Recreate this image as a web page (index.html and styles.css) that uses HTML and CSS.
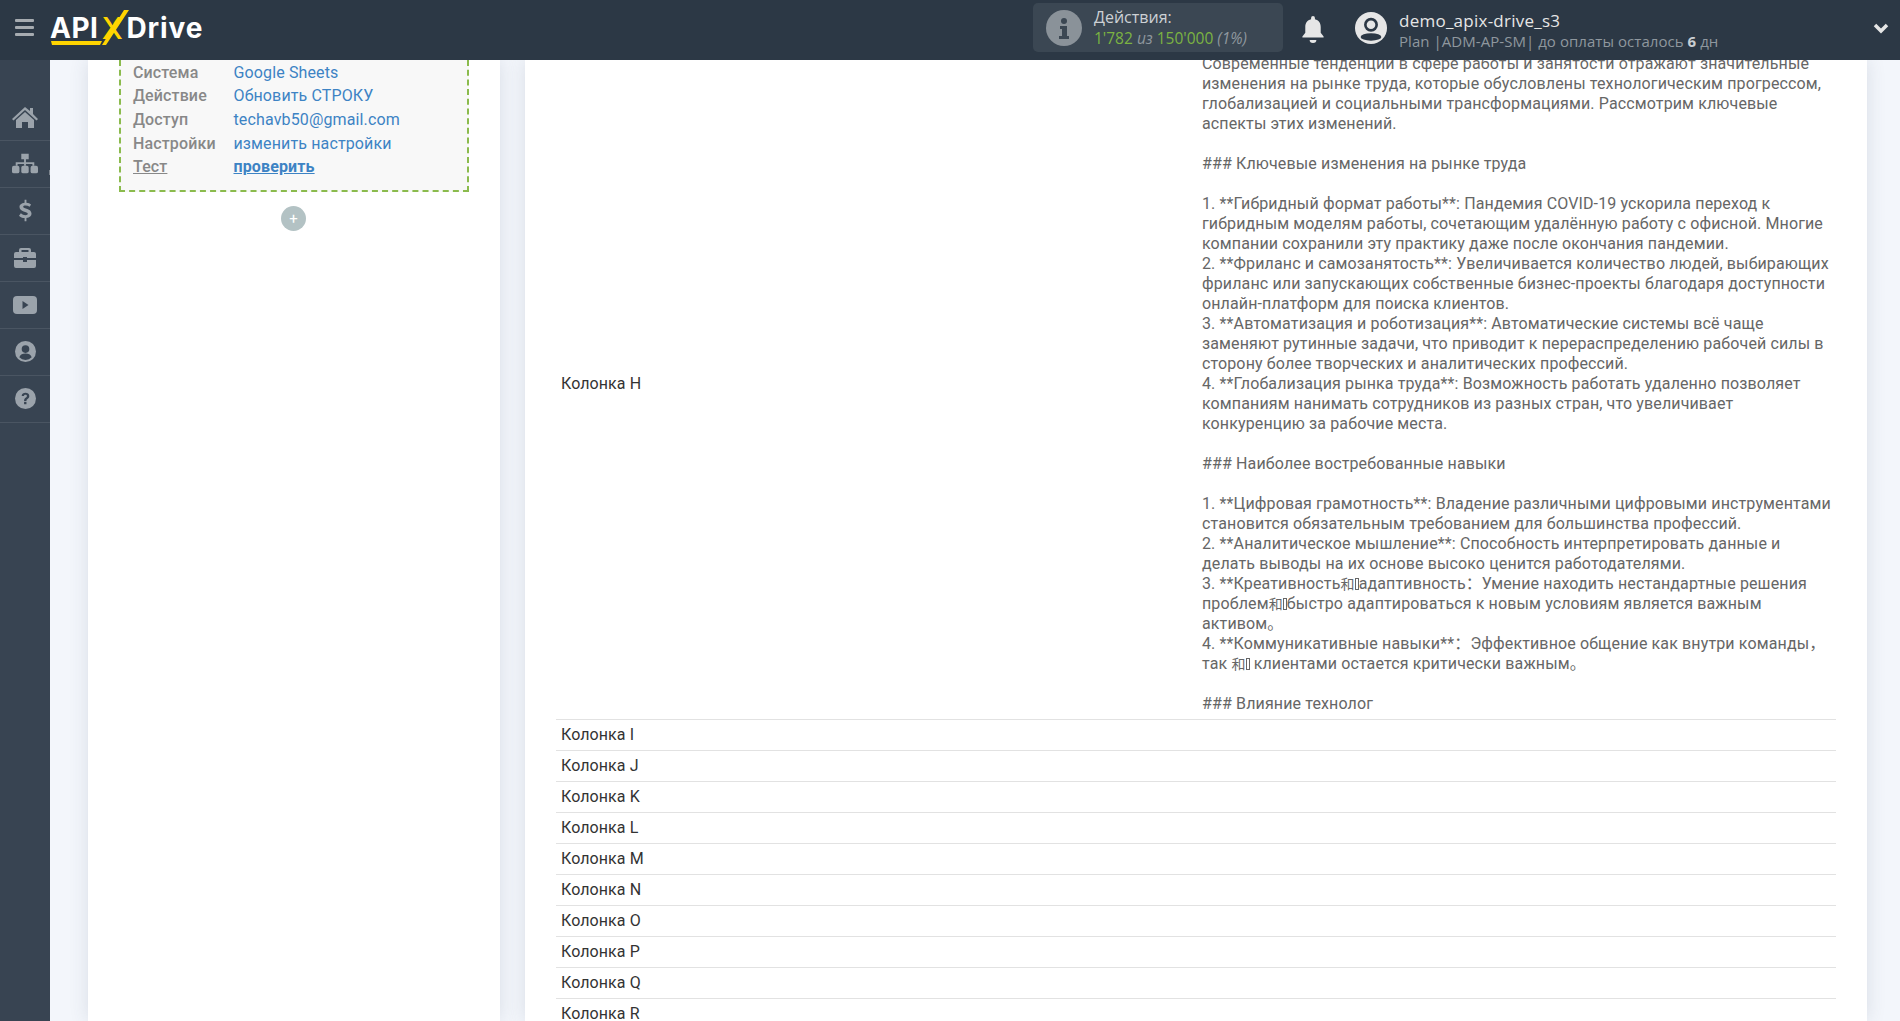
FILE: index.html
```html
<!DOCTYPE html>
<html lang="ru">
<head>
<meta charset="utf-8">
<title>ApiX-Drive</title>
<link rel="stylesheet" href="styles.css">
</head>
<body>
<header class="topbar">
  <div class="burger"><span></span><span></span><span></span></div>
  <div class="logo">
    <span class="logo-api">API</span><span class="logo-x">X</span><span class="logo-drive">Drive</span>
    <svg class="logo-mark" viewBox="50 8 80 38" aria-hidden="true"><polygon points="51,40 102,40 100,44 52,44" fill="#ffd400"/><polygon points="102,44 124,9 129,9 106,44" fill="#ffd400"/></svg>
  </div>
  <div class="actions">
    <svg class="info" viewBox="0 0 36 36"><circle cx="18" cy="18" r="18" fill="#8a9299"/><circle cx="18" cy="11" r="3" fill="#3b4753"/><path d="M14 16h7v10h2v3H13v-3h3v-7h-2z" fill="#3b4753"/></svg>
    <div class="actions-text">
      <div class="actions-title">Действия:</div>
      <div class="actions-count"><span class="green">1'782</span> <i>из</i> <span class="green">150'000</span> <i>(1%)</i></div>
    </div>
  </div>
  <svg class="bell" viewBox="0 0 24 28"><path d="M12 0a2 2 0 0 1 2 2v1.300c4 1 6 4 6 8v6l3 4v1H1v-1l3-4v-6c0-4 2-7 6-8V2a2 2 0 0 1 2-2z" fill="#e6e6e6"/><path d="M8.500 25h7a3.500 3 0 0 1-7 0z" fill="#e6e6e6"/></svg>
  <svg class="avatar" viewBox="0 0 34 34"><circle cx="17" cy="17" r="17" fill="#e6e6e6"/><circle cx="17" cy="13.500" r="6" fill="#e6e6e6" stroke="#2c3845" stroke-width="2.800"/><ellipse cx="17" cy="26.500" rx="11" ry="4" fill="#2c3845"/></svg>
  <div class="user">
    <div class="user-name">demo_apix-drive_s3</div>
    <div class="user-plan">Plan |ADM-AP-SM| до оплаты осталось <b>6</b> дн</div>
  </div>
  <svg class="chevron" viewBox="0 0 16 12"><path d="M2 3l6 6 6-6" fill="none" stroke="#e6e6e6" stroke-width="3.500"/></svg>
</header>
<div class="body">
  <nav class="sidebar">
    <div class="side-item"><svg class="wide" viewBox="0 0 26 22"><path d="M13 1l5 4V2h3v6l5 5-1.500 1.500L13 4 1.500 14.500 0 13z" fill="#9ba3ab"/><path d="M13 6l9 8v8h-6v-6h-6v6H4v-8z" fill="#9ba3ab"/></svg></div>
    <div class="side-item tick"><svg class="wide" viewBox="0 0 28 22"><path d="M10 0h8v6h-3v3h9v4h-2v-2h-7v2h-2v-2H6v2H4V9h9V6h-3z" fill="#9ba3ab"/><rect y="13" width="8" height="8" rx="2" fill="#9ba3ab"/><rect x="10" y="13" width="8" height="8" rx="2" fill="#9ba3ab"/><rect x="20" y="13" width="8" height="8" rx="2" fill="#9ba3ab"/></svg></div>
    <div class="side-item"><svg class="dollar" viewBox="0 0 14 24"><path d="M6 0h2v3c2 0 4 1 5 2l-1.500 2.500C10 6.500 8.500 6 7 6c-1.500 0-2.500.5-2.500 1.500 0 2.500 9 1.500 9 7.500 0 2.500-2 4-5.500 4.500V23H6v-3.500c-2.500 0-4.500-1-6-2.500l2-2.500c1.500 1.300 3 2 5 2 1.500 0 2.500-.5 2.500-1.500 0-2.500-9-1.500-9-7.500C.5 5 2.500 3.500 6 3z" fill="#9ba3ab"/></svg></div>
    <div class="side-item"><svg viewBox="0 0 22 20"><path d="M7 0h8a2 2 0 0 1 2 2v2h3a2 2 0 0 1 2 2v4H13V9H9v1H0V6a2 2 0 0 1 2-2h3V2a2 2 0 0 1 2-2zm.5 2v2h7V2z" fill="#9ba3ab" fill-rule="evenodd"/><path d="M0 12h9v2h4v-2h9v6a2 2 0 0 1-2 2H2a2 2 0 0 1-2-2z" fill="#9ba3ab"/></svg></div>
    <div class="side-item"><svg viewBox="0 0 24 18"><rect width="24" height="18" rx="4" fill="#9ba3ab"/><path d="M9.500 5l6 4-6 4z" fill="#384452"/></svg></div>
    <div class="side-item"><svg class="round" viewBox="0 0 22 22"><circle cx="11" cy="11" r="11" fill="#9ba3ab"/><circle cx="11" cy="8.500" r="4" fill="#384452"/><path d="M4.500 17c1-3 3.500-4 6.500-4s5.500 1 6.500 4a9 9 0 0 1-13 0z" fill="#384452"/></svg></div>
    <div class="side-item"><svg class="round" viewBox="0 0 22 22"><circle cx="11" cy="11" r="11" fill="#9ba3ab"/><path d="M7 8.500C7 6 9 5 11 5s4 1 4 3.500c0 3-3 3-3 5h-2.500c0-3.500 3-3.500 3-5.200 0-.9-.7-1.300-1.500-1.300s-1.500.5-1.700 1.500z" fill="#384452"/><rect x="9.500" y="14.500" width="2.500" height="2.500" fill="#384452"/></svg></div>
  </nav>
  <main class="main">
    <div class="scrolled">
      <section class="card card-left">
        <div class="summary">
          <div class="summary-row"><span class="sum-label">Система</span><a class="sum-link">Google Sheets</a></div>
          <div class="summary-row"><span class="sum-label">Действие</span><a class="sum-link">Обновить СТРОКУ</a></div>
          <div class="summary-row"><span class="sum-label">Доступ</span><a class="sum-link">techavb50@gmail.com</a></div>
          <div class="summary-row"><span class="sum-label">Настройки</span><a class="sum-link">изменить настройки</a></div>
          <div class="summary-row"><span class="sum-label under">Тест</span><a class="sum-link check">проверить</a></div>
        </div>
        <div class="add-btn">+</div>
      </section>
      <section class="card card-right">
        <table class="data">
          <tr>
            <td class="col-name">Колонка H</td>
            <td class="col-value">Современные тенденции в сфере работы и занятости отражают значительные изменения на рынке труда, которые обусловлены технологическим прогрессом, глобализацией и социальными трансформациями. Рассмотрим ключевые аспекты этих изменений.<br><br>### Ключевые изменения на рынке труда<br><br>1. **Гибридный формат работы**: Пандемия COVID-19 ускорила переход к гибридным моделям работы, сочетающим удалённую работу с офисной. Многие компании сохранили эту практику даже после окончания пандемии.<br>2. **Фриланс и самозанятость**: Увеличивается количество людей, выбирающих фриланс или запускающих собственные бизнес-проекты благодаря доступности онлайн-платформ для поиска клиентов.<br>3. **Автоматизация и роботизация**: Автоматические системы всё чаще заменяют рутинные задачи, что приводит к перераспределению рабочей силы в сторону более творческих и аналитических профессий.<br>4. **Глобализация рынка труда**: Возможность работать удаленно позволяет компаниям нанимать сотрудников из разных стран, что увеличивает конкуренцию за рабочие места.<br><br>### Наиболее востребованные навыки<br><br>1. **Цифровая грамотность**: Владение различными цифровыми инструментами становится обязательным требованием для большинства профессий.<br>2. **Аналитическое мышление**: Способность интерпретировать данные и делать выводы на их основе высоко ценится работодателями.<br>3. **Креативность<span class="cjk">和</span><span class="tofu"></span>адаптивность：Умение находить нестандартные решения проблем<span class="cjk">和</span><span class="tofu"></span>быстро адаптироваться к новым условиям является важным активом。<br>4. **Коммуникативные навыки**：Эффективное общение как внутри команды， так <span class="cjk">和</span><span class="tofu"></span> клиентами остается критически важным。<br><br>### Влияние технолог</td>
          </tr>
          <tr><td class="col-name">Колонка I</td><td></td></tr>
          <tr><td class="col-name">Колонка J</td><td></td></tr>
          <tr><td class="col-name">Колонка K</td><td></td></tr>
          <tr><td class="col-name">Колонка L</td><td></td></tr>
          <tr><td class="col-name">Колонка M</td><td></td></tr>
          <tr><td class="col-name">Колонка N</td><td></td></tr>
          <tr><td class="col-name">Колонка O</td><td></td></tr>
          <tr><td class="col-name">Колонка P</td><td></td></tr>
          <tr><td class="col-name">Колонка Q</td><td></td></tr>
          <tr><td class="col-name">Колонка R</td><td></td></tr>
        </table>
      </section>
    </div>
  </main>
</div>
</body>
</html>
```
FILE: styles.css
```css
* { box-sizing: border-box; }
html, body { margin: 0; height: 100%; overflow: hidden; }
body { font-family: Roboto, "Noto Sans CJK SC", sans-serif; font-size: 16px; color: #333; background: #f3f6fb; display: flex; flex-direction: column; }

.topbar { height: 60px; flex: none; background: #2c3845; display: flex; align-items: center; padding-bottom: 5px; position: relative; z-index: 2; color: #e6e6e6; font-family: "Open Sans", sans-serif; }
.burger { width: 19px; margin-left: 15px; display: flex; flex-direction: column; gap: 4px; flex: none; }
.burger span { height: 3px; background: #a6abb0; border-radius: 1px; }
.logo { position: relative; margin-left: 16px; width: 152px; height: 38px; flex: none; display: flex; align-items: center; font-family: Inter, "Liberation Sans", sans-serif; font-weight: 700; font-size: 28px; letter-spacing: .5px; color: #fff; }
.logo-x { width: 28px; flex: none; color: #ffd400; font-weight: 500; font-size: 30px; text-align: center; }
.logo-drive { letter-spacing: .9px; }
.logo-mark { position: absolute; left: 0; top: 0; width: 80px; height: 38px; overflow: visible; }
.actions { margin-left: 831px; width: 250px; height: 49px; flex: none; background: #3b4753; border-radius: 5px; display: flex; align-items: center; padding-left: 13px; }
.info { width: 36px; height: 36px; flex: none; }
.actions-text { margin-left: 12px; font-size: 16px; line-height: 21px; }
.actions-title { color: #cdd1d5; }
.actions-count { font-size: 15.500px; color: #8f979e; }
.green { color: #7cb342; }
.bell { width: 24px; height: 27px; margin: 3px 0 0 18px; flex: none; }
.avatar { width: 32px; height: 32px; margin-left: 30px; flex: none; }
.user { margin: 4px 0 0 12px; flex: none; }
.user-name { font-size: 17px; letter-spacing: .25px; line-height: 22px; color: #e6e6e6; }
.user-plan { font-size: 15px; letter-spacing: .05px; line-height: 18px; color: #8f979e; }
.user-plan b { color: #c9ced2; }
.chevron { position: absolute; right: 11px; top: 22px; width: 16px; height: 12px; }

.body { flex: 1; display: flex; min-height: 0; }
.sidebar { width: 50px; flex: none; background: #384452; padding-top: 34px; }
.side-item { height: 47px; border-bottom: 1px solid #4a5562; display: flex; align-items: center; justify-content: center; position: relative; }
.side-item svg { width: 24px; height: 20px; margin-bottom: 1px; }
.side-item svg.wide { width: 26px; height: 22px; }
.side-item svg.dollar { width: 13px; height: 24px; }
.side-item svg.round { width: 21px; height: 21px; }
.tick::after { content: ""; position: absolute; right: 0; top: 29px; width: 1px; height: 5px; background: #7d858e; }

.main { flex: 1; min-width: 0; overflow: hidden; }
.scrolled { display: flex; align-items: stretch; gap: 25px; margin-left: 38px; margin-right: 33px; height: 100%; }
.card { background: #fff; box-shadow: 0 0 18px rgba(60, 70, 100, .14); }
.card-left { width: 412px; flex: none; padding-left: 31px; }
.card-right { flex: 1; min-width: 0; padding: 0 31px; overflow: hidden; }

.summary { width: 350px; height: 132px; background: #f8f8f8; border: 2px dashed #8bbb4d; border-top: 0; padding: .3px 12px 0; letter-spacing: .13px; }
.summary-row { height: 23.700px; display: flex; align-items: center; }
.sum-label { width: 100.500px; color: #888; font-weight: 500; }
.sum-link { color: #3d83c4; }
.under { text-decoration: underline; }
.check { font-weight: 700; text-decoration: underline; }
.add-btn { width: 25px; height: 25px; margin: 14px 0 0 162px; border-radius: 50%; background: #b3c2c4; color: #fff; font-size: 15px; display: flex; align-items: center; justify-content: center; }

.data { width: 100%; border-collapse: collapse; table-layout: fixed; margin-top: -11px; }
.data td { padding: 5px; line-height: 20px; border-bottom: 1px solid #e2e2e2; }
.data .col-name { width: 641px; color: #333; letter-spacing: .08px; }
.data .col-value { color: #666; letter-spacing: .13px; }
.cjk { font-size: 14px; line-height: 0; }
.tofu { display: inline-block; width: 4px; height: 12px; border: 1px solid #666; vertical-align: -1px; }
```
